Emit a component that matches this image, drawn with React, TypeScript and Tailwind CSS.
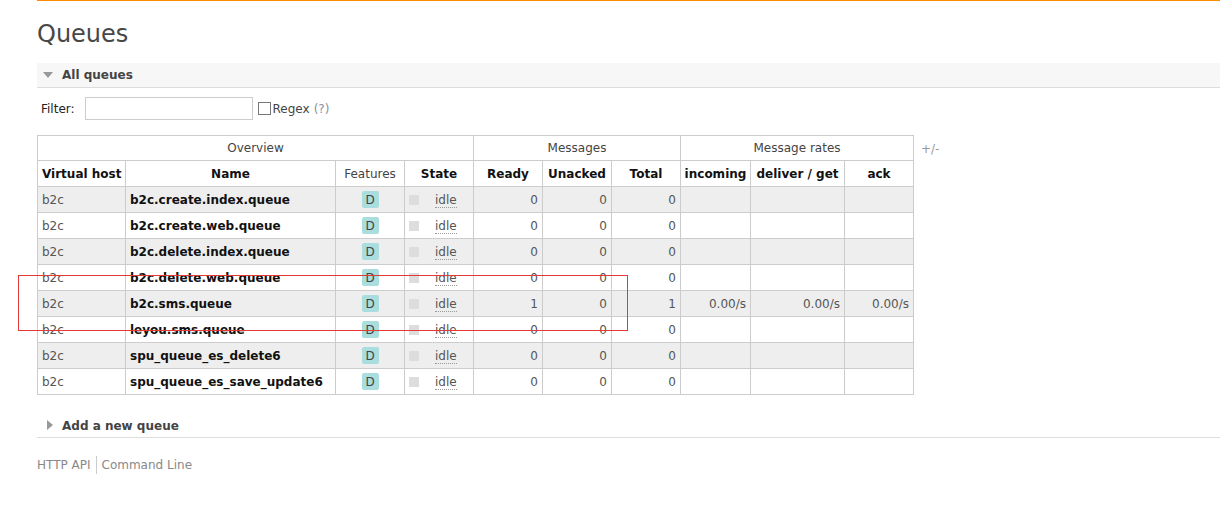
import React from "react";

const rows = [
  { name: "b2c.create.index.queue", ready: 0, unacked: 0, total: 0 },
  { name: "b2c.create.web.queue", ready: 0, unacked: 0, total: 0 },
  { name: "b2c.delete.index.queue", ready: 0, unacked: 0, total: 0 },
  { name: "b2c.delete.web.queue", ready: 0, unacked: 0, total: 0 },
  { name: "b2c.sms.queue", ready: 1, unacked: 0, total: 1, rates: true },
  { name: "leyou.sms.queue", ready: 0, unacked: 0, total: 0 },
  { name: "spu_queue_es_delete6", ready: 0, unacked: 0, total: 0 },
  { name: "spu_queue_es_save_update6", ready: 0, unacked: 0, total: 0 },
];

export default function App() {
  return (
    <div
      className="relative w-[1220px] h-[528px] bg-white overflow-hidden text-[12px] text-[#484848]"
      style={{ fontFamily: '"DejaVu Sans", Verdana, sans-serif' }}
    >
      <div className="ml-[37px]">
        <div className="h-px bg-[#ff8c00]" />
        <h1 className="text-[24px] leading-[28px] text-[#484848] mt-[19px]">Queues</h1>

        <div className="mt-[15px] h-[25px] bg-[#f7f7f7] border-b border-[#dddddd] flex items-center">
          <span className="ml-[6px] w-0 h-0 border-l-[5px] border-r-[5px] border-t-[6px] border-l-transparent border-r-transparent border-t-[#999]" />
          <span className="ml-[9px] font-bold text-[#444]">All queues</span>
        </div>

        <div className="mt-[9px] flex items-center h-[23px]">
          <span className="ml-[4px] text-[#222]">Filter:</span>
          <div className="ml-[10px] w-[168px] h-[23px] border border-[#cccccc] bg-white" />
          <span className="ml-[5px] w-[13px] h-[13px] border border-[#777] bg-white" />
          <span className="ml-[2px] text-[#444]">Regex</span>
          <span className="ml-[4px] text-[#8a8fa0]">(?)</span>
        </div>

        <div className="mt-[15px] flex items-start">
          <table className="border-collapse table-fixed w-[876px]">
            <colgroup>
              <col className="w-[88px]" />
              <col className="w-[210px]" />
              <col className="w-[69px]" />
              <col className="w-[69px]" />
              <col className="w-[69px]" />
              <col className="w-[69px]" />
              <col className="w-[69px]" />
              <col className="w-[70px]" />
              <col className="w-[94px]" />
              <col className="w-[69px]" />
            </colgroup>
            <thead>
              <tr className="h-[25px]">
                <th colSpan={4} className="border border-[#cccccc] font-normal text-[#444] p-0">Overview</th>
                <th colSpan={3} className="border border-[#cccccc] font-normal text-[#444] p-0">Messages</th>
                <th colSpan={3} className="border border-[#cccccc] font-normal text-[#444] p-0">Message rates</th>
              </tr>
              <tr className="h-[26px] text-[#111]">
                <th className="border border-[#cccccc] p-0 text-left pl-[4px] font-bold whitespace-nowrap">Virtual host</th>
                <th className="border border-[#cccccc] p-0 font-bold">Name</th>
                <th className="border border-[#cccccc] p-0 font-normal text-[#444]">Features</th>
                <th className="border border-[#cccccc] p-0 font-bold">State</th>
                <th className="border border-[#cccccc] p-0 font-bold">Ready</th>
                <th className="border border-[#cccccc] p-0 font-bold">Unacked</th>
                <th className="border border-[#cccccc] p-0 font-bold">Total</th>
                <th className="border border-[#cccccc] p-0 font-bold whitespace-nowrap">incoming</th>
                <th className="border border-[#cccccc] p-0 font-bold whitespace-nowrap">deliver / get</th>
                <th className="border border-[#cccccc] p-0 font-bold">ack</th>
              </tr>
            </thead>
            <tbody>
              {rows.map((r, i) => (
                <tr key={r.name} className={`h-[26px] ${i % 2 === 0 ? "bg-[#eeeeee]" : "bg-white"}`}>
                  <td className="border border-[#cccccc] p-0 pl-[4px] text-[#555]">b2c</td>
                  <td className="border border-[#cccccc] p-0 pl-[4px] font-bold text-[#111] whitespace-nowrap">{r.name}</td>
                  <td className="border border-[#cccccc] p-0">
                    <div className="flex justify-center">
                      <span className="w-[17px] h-[17px] bg-[#aadddd] text-[#444] rounded-[2px] flex items-center justify-center">D</span>
                    </div>
                  </td>
                  <td className="border border-[#cccccc] p-0">
                    <div className="flex items-center">
                      <span className="ml-[4px] w-[10px] h-[10px] bg-[#dddddd]" />
                      <span className="ml-[16px] mt-[2px] text-[#555] border-b border-dotted border-[#999] leading-[14px]">idle</span>
                    </div>
                  </td>
                  <td className="border border-[#cccccc] p-0 pr-[4px] text-right text-[#555]">{r.ready}</td>
                  <td className="border border-[#cccccc] p-0 pr-[4px] text-right text-[#555]">{r.unacked}</td>
                  <td className="border border-[#cccccc] p-0 pr-[4px] text-right text-[#555]">{r.total}</td>
                  <td className="border border-[#cccccc] p-0 pr-[4px] text-right text-[#555]">{r.rates ? "0.00/s" : ""}</td>
                  <td className="border border-[#cccccc] p-0 pr-[4px] text-right text-[#555]">{r.rates ? "0.00/s" : ""}</td>
                  <td className="border border-[#cccccc] p-0 pr-[4px] text-right text-[#555]">{r.rates ? "0.00/s" : ""}</td>
                </tr>
              ))}
            </tbody>
          </table>
          <span className="ml-[7px] mt-[5px] text-[#999]">+/-</span>
        </div>

        <div className="mt-[18px] h-[25px] border-b border-[#dddddd] flex items-center">
          <span className="ml-[10px] w-0 h-0 border-t-[5px] border-b-[5px] border-l-[6px] border-t-transparent border-b-transparent border-l-[#999]" />
          <span className="ml-[9px] mt-[1px] font-bold text-[#444]">Add a new queue</span>
        </div>

        <div className="mt-[18px] flex items-center text-[#888]">
          <span>HTTP API</span>
          <span className="mx-[5px] w-px h-[18px] bg-[#cccccc]" />
          <span>Command Line</span>
        </div>
      </div>

      <div className="absolute left-[18px] top-[275px] w-[610px] h-[56px] border border-[#e53935]" />
    </div>
  );
}
